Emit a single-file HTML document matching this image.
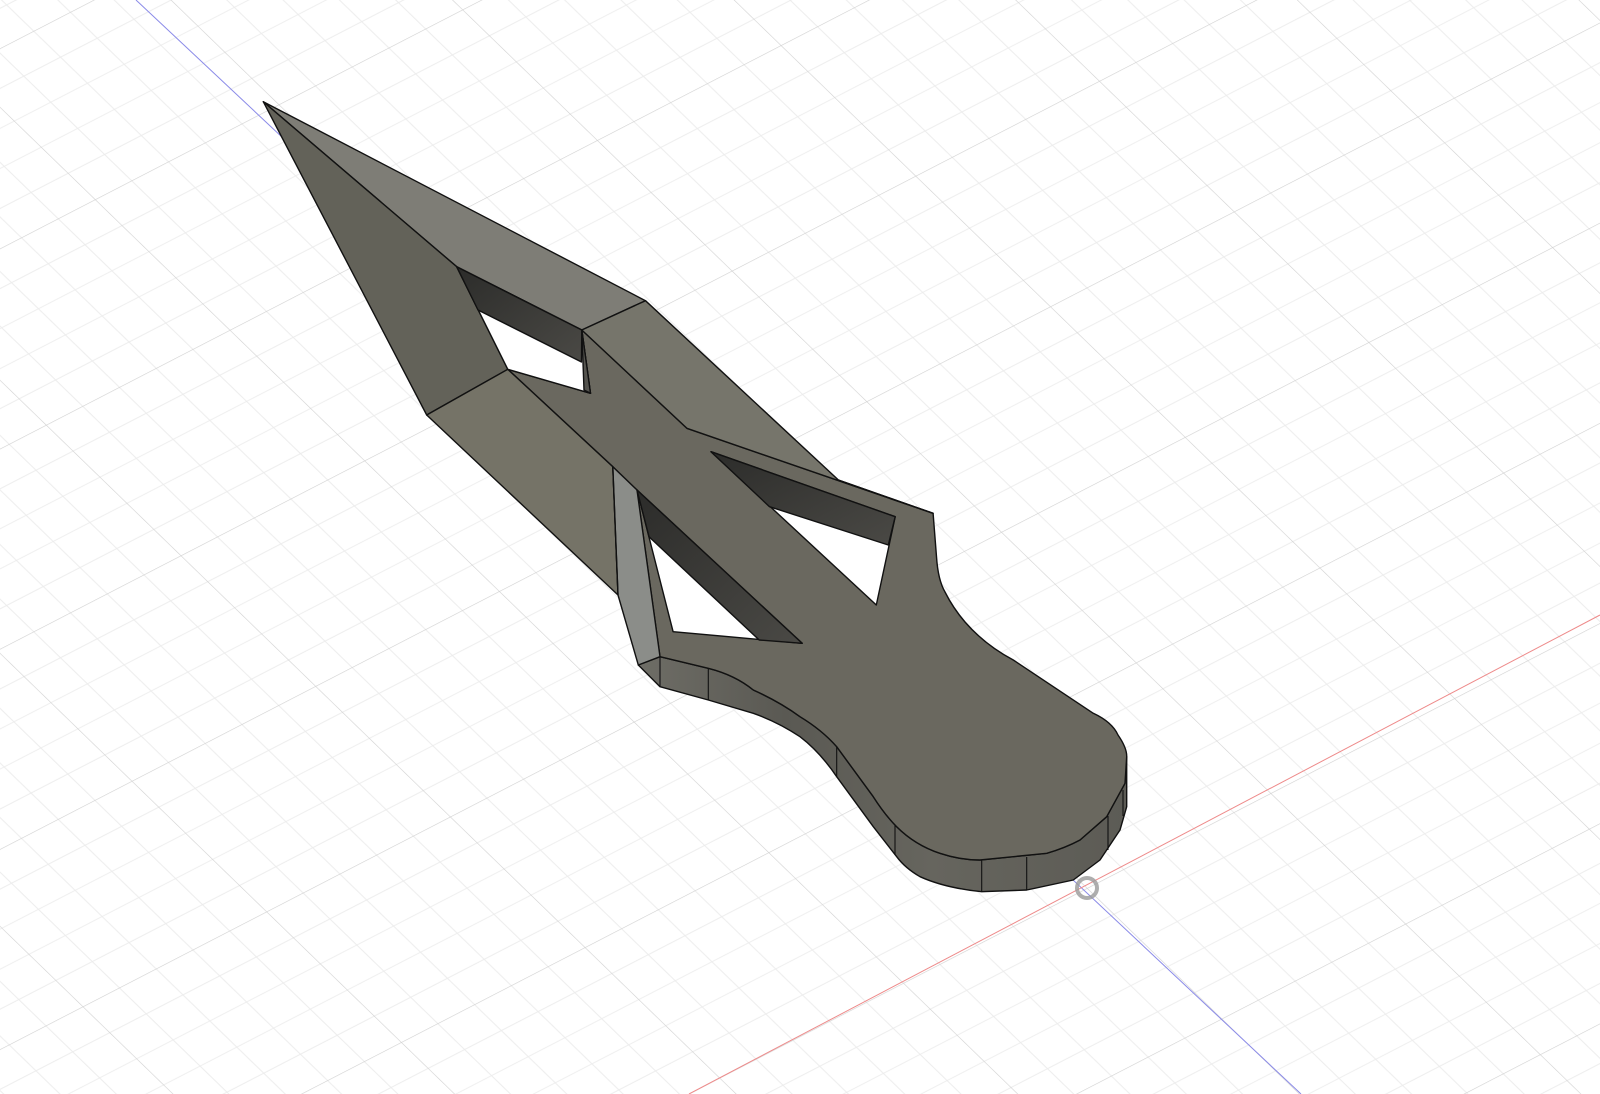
<!DOCTYPE html>
<html><head><meta charset="utf-8"><style>html,body{margin:0;padding:0;background:#fff;overflow:hidden}svg{display:block}</style></head>
<body>
<svg width="1600" height="1094" viewBox="0 0 1600 1094" xmlns="http://www.w3.org/2000/svg">
<defs>
<pattern id="g" patternUnits="userSpaceOnUse" width="100" height="100" patternTransform="matrix(1.837,-0.949,1.347,1.306,1086.7,888.3)">
<g stroke="#ececec" stroke-width="0.5" fill="none">
<line x1="20" y1="0" x2="20" y2="100"/><line x1="40" y1="0" x2="40" y2="100"/><line x1="60" y1="0" x2="60" y2="100"/><line x1="80" y1="0" x2="80" y2="100"/>
<line x1="0" y1="20" x2="100" y2="20"/><line x1="0" y1="40" x2="100" y2="40"/><line x1="0" y1="60" x2="100" y2="60"/><line x1="0" y1="80" x2="100" y2="80"/>
</g>
<g stroke="#d0d0d0" stroke-width="0.6" fill="none">
<line x1="0" y1="0" x2="0" y2="100"/><line x1="0" y1="0" x2="100" y2="0"/>
</g>
</pattern>
<linearGradient id="wall" x1="0" y1="0" x2="1" y2="0">
<stop offset="0" stop-color="#6e6d66"/><stop offset="0.3" stop-color="#5a5953"/><stop offset="0.6" stop-color="#66655e"/><stop offset="1" stop-color="#5c5b55"/>
</linearGradient>
<linearGradient id="hw" x1="0" y1="0" x2="1" y2="1">
<stop offset="0" stop-color="#2c2c2a"/><stop offset="1" stop-color="#4a4945"/>
</linearGradient>
</defs>
<rect width="1600" height="1094" fill="#fff"/>
<rect width="1600" height="1094" fill="url(#g)"/>
<line x1="136" y1="0" x2="1301" y2="1094" stroke="#8a8ae8" stroke-width="1"/>
<line x1="689" y1="1094" x2="1600" y2="615" stroke="#ee8a8a" stroke-width="1"/>

<g stroke="#111" stroke-width="1.4" stroke-linejoin="round">
<!-- handle side wall -->
<path fill="url(#wall)" d="M638.3,665 L660,656.7 L708.3,668.3 Q735,675 753.3,690 Q780,702 800,716.7 Q822,730 836.7,746.7 L873.3,796.7 Q885,815 896.7,826.7 Q915,845 940,853.3 Q960,860 980,860 L1046.7,853.3 Q1065,848 1080,840 L1106.7,816.7 L1125,783.3 L1126.7,756.7 L1126.7,806.7 L1120,830 L1100,860 L1073.3,880 L1026.7,890 L981.7,891.7 Q945,888 920,876.7 Q905,868 896.7,856.7 L873.3,826.7 L836.7,776.7 Q820,752 800,736.7 Q778,722 753.3,713.3 L708.3,700 L660,686.7 Z"/>
<g stroke-width="1.1" fill="none">
<line x1="708.3" y1="668.3" x2="708.3" y2="700"/><line x1="836.7" y1="746.7" x2="836.7" y2="776.7"/><line x1="895" y1="825" x2="895" y2="855"/><line x1="981.7" y1="860" x2="981.7" y2="891.7"/><line x1="1026.7" y1="857" x2="1026.7" y2="890"/><line x1="1108" y1="816" x2="1108" y2="850"/><line x1="1123" y1="790" x2="1123" y2="816"/><line x1="660" y1="656.7" x2="660" y2="686.7"/>
</g>
<!-- top face -->
<path fill="#6a685f" d="M507.8,369.3 L590.5,393.3 L581.8,330 L686.9,428.3 L933.1,513.3 L936.5,556.7 Q938,580 945,592 Q953,608 965,622 Q985,645 1013.3,660 L1093.3,713.3 Q1112,722 1118,735 Q1127,748 1126.7,756.7 L1125,783.3 L1106.7,816.7 L1080,840 Q1065,848 1046.7,853.3 L980,860 Q960,860 940,853.3 Q915,845 896.7,826.7 Q885,815 873.3,796.7 L836.7,746.7 Q822,730 800,716.7 Q780,702 753.3,690 Q735,675 708.3,668.3 L660,656.7 L637,490 L612.8,466.7 Z"/>
<!-- upper-left facet -->
<path fill="#7e7d76" d="M263.3,101.7 L645.5,300.7 L581.8,330 L456.7,266.7 Z"/>
<!-- left dark facet -->
<path fill="#636259" d="M263.3,101.7 L456.7,266.7 L507.8,369.3 L426.7,415 Z"/>
<!-- lower-left facet -->
<path fill="#757367" d="M426.7,415 L507.8,369.3 L612.8,466.7 L618,595 Z"/>
<!-- right facet -->
<path fill="#76756b" d="M581.8,330 L645.5,300.7 L838.4,480 L933.1,513.3 L686.9,428.3 Z"/>
<!-- guard light side -->
<path fill="#8b8d89" d="M612.8,466.7 L637,490 L660,656.7 L638.3,665 L618,595 Z"/>
<!-- hole 1 -->
<path fill="#fff" d="M456.7,266.7 L581.8,330 L590.5,393.3 L507.8,369.3 Z"/>
<path fill="url(#hw)" d="M456.7,266.7 L581.8,330 L581.5,362 L478,310 Z"/>
<path fill="#55544f" d="M581.8,330 L590.5,393.3 L584,390 Z"/>
<!-- hole 2 -->
<path fill="#fff" d="M711,451.7 L895.2,516.7 L876.3,605 Z"/>
<path fill="url(#hw)" d="M711,451.7 L895.2,516.7 L888.3,545 L769.5,506.7 Z"/>
<!-- hole 3 -->
<path fill="#fff" d="M637,490 L802.2,643.3 L673.1,631.7 Z"/>
<path fill="url(#hw)" d="M637,490 L802.2,643.3 L759.2,640 L649,536.7 Z"/>
</g>
<!-- inner lines -->
<g stroke="#111" stroke-width="1.3" fill="none">
<line x1="838.4" y1="480" x2="933.1" y2="513.3"/>
<line x1="612.8" y1="466.7" x2="618" y2="595"/>
</g>
<circle cx="1087" cy="888" r="10" fill="none" stroke="#9a9a9a" stroke-width="4" opacity="0.8"/>
</svg>
</body></html>
